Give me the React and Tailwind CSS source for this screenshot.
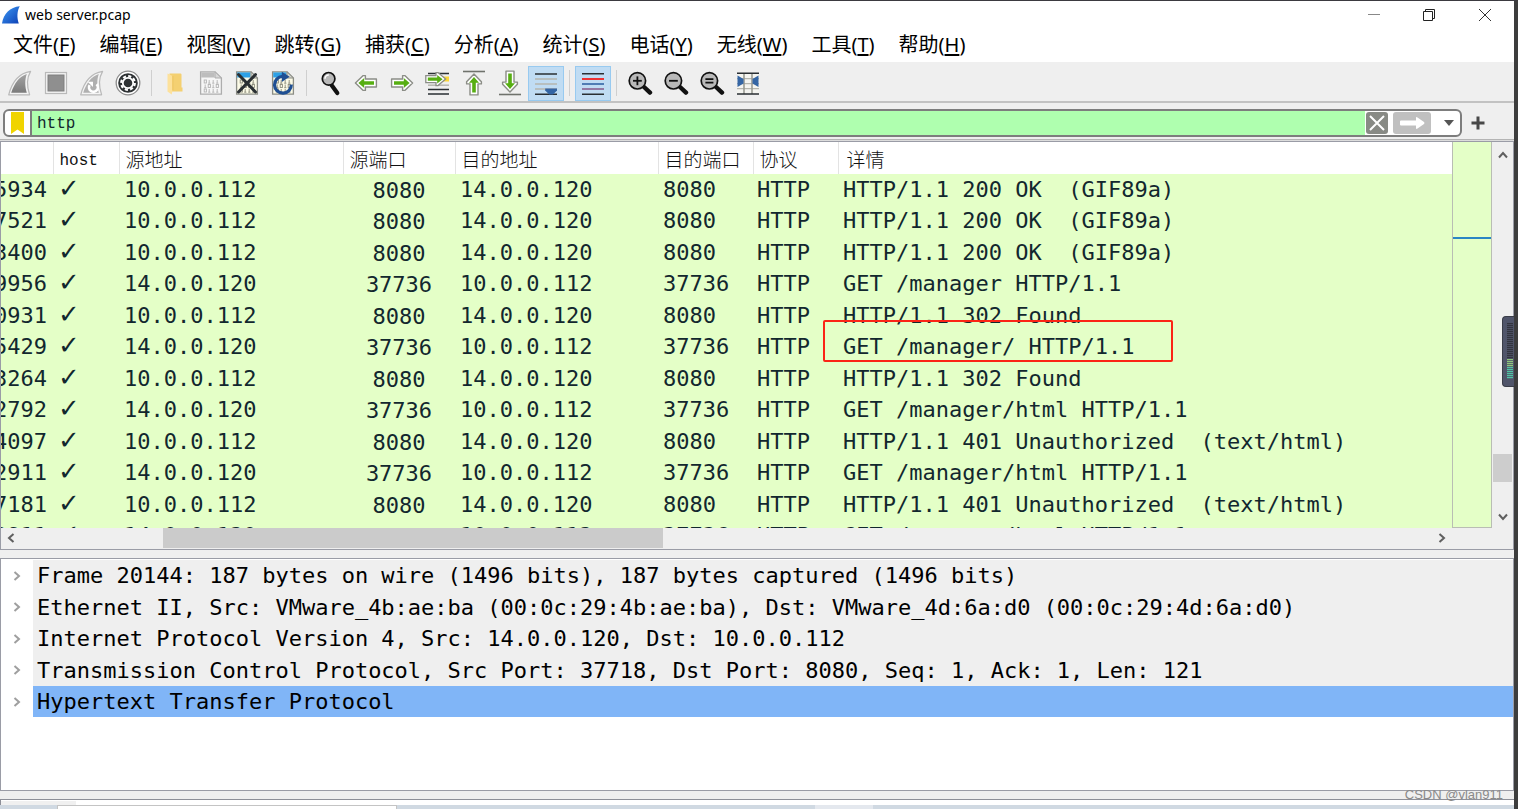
import React from "react";

const MENUS = [
  ["文件", "F"], ["编辑", "E"], ["视图", "V"], ["跳转", "G"], ["捕获", "C"], ["分析", "A"],
  ["统计", "S"], ["电话", "Y"], ["无线", "W"], ["工具", "T"], ["帮助", "H"],
];

const A = "10.0.0.112";
const B = "14.0.0.120";
const ROWS = [
  ["5934", A, "8080", B, "8080", "HTTP/1.1 200 OK  (GIF89a)"],
  ["7521", A, "8080", B, "8080", "HTTP/1.1 200 OK  (GIF89a)"],
  ["3400", A, "8080", B, "8080", "HTTP/1.1 200 OK  (GIF89a)"],
  ["9956", B, "37736", A, "37736", "GET /manager HTTP/1.1"],
  ["0931", A, "8080", B, "8080", "HTTP/1.1 302 Found"],
  ["5429", B, "37736", A, "37736", "GET /manager/ HTTP/1.1"],
  ["3264", A, "8080", B, "8080", "HTTP/1.1 302 Found"],
  ["2792", B, "37736", A, "37736", "GET /manager/html HTTP/1.1"],
  ["4097", A, "8080", B, "8080", "HTTP/1.1 401 Unauthorized  (text/html)"],
  ["2911", B, "37736", A, "37736", "GET /manager/html HTTP/1.1"],
  ["7181", A, "8080", B, "8080", "HTTP/1.1 401 Unauthorized  (text/html)"],
  ["2911", B, "37736", A, "37736", "GET /manager/html HTTP/1.1"],
];
const MARKED_ROW = 5;

const DETAILS = [
  "Frame 20144: 187 bytes on wire (1496 bits), 187 bytes captured (1496 bits)",
  "Ethernet II, Src: VMware_4b:ae:ba (00:0c:29:4b:ae:ba), Dst: VMware_4d:6a:d0 (00:0c:29:4d:6a:d0)",
  "Internet Protocol Version 4, Src: 14.0.0.120, Dst: 10.0.0.112",
  "Transmission Control Protocol, Src Port: 37718, Dst Port: 8080, Seq: 1, Ack: 1, Len: 121",
  "Hypertext Transfer Protocol",
];

function Svg({ children }) {
  return (
    <svg viewBox="0 0 26 26" className="size-[26px] shrink-0" fill="none" aria-hidden="true">
      {children}
    </svg>
  );
}

const FIN = "M1.7 24.8C5 12 12 3.2 23.6 1.4C19.6 8 20 17 22.6 24.8Z";
const FIN_IN = "M4.2 22.8C7.5 13.2 12 6.6 19.8 4C17.6 10 18 17 19.8 22.8Z";

function Fin({ restart }) {
  return (
    <Svg>
      <path d={FIN} fill="#f4f4f4" stroke="#b9b9b9" strokeWidth="1.2" strokeLinejoin="round" />
      <path d={FIN_IN} fill={restart ? "#b0b0b0" : "url(#finGray)"} />
      <defs>
        <linearGradient id="finGray" x1="0" y1="0" x2="0" y2="1">
          <stop offset="0" stopColor="#a4a4a4" />
          <stop offset="1" stopColor="#7b7b7b" />
        </linearGradient>
      </defs>
      {restart && (
        <>
          <path d="M17.5 14.2A4.4 4.4 0 1 1 10.6 15.2" stroke="#fff" strokeWidth="2.6" />
          <path d="M8.6 11.8H14V17Z" fill="#fff" />
        </>
      )}
    </Svg>
  );
}

function Stop() {
  return (
    <Svg>
      <rect x="2.5" y="2.5" width="21" height="21" fill="#f4f4f4" stroke="#b9b9b9" strokeWidth="1.2" />
      <rect x="5" y="5" width="16" height="16" fill="#8f8f8f" stroke="#7f7f7f" />
    </Svg>
  );
}

function Options() {
  return (
    <Svg>
      <circle cx="13" cy="13" r="11.8" fill="#fff" stroke="#8c8c8c" strokeWidth="1.3" />
      <circle cx="13" cy="13" r="9.8" fill="#2e3234" />
      <circle cx="13" cy="13" r="6.8" stroke="#fff" strokeWidth="2.2" strokeDasharray="3.1 2.24" />
      <circle cx="13" cy="13" r="5.2" stroke="#fff" strokeWidth="1.8" />
    </Svg>
  );
}

function Folder() {
  return (
    <Svg>
      <path d="M7.5 3.5H18.5Q19.5 3.5 19.5 4.5V17.5H20.5V21.5H7.5Z" fill="#f4d071" />
      <path d="M5.5 3.6L10.6 6V20.5L9.6 24.6L5.5 21.6Z" fill="#fde19b" />
      <path d="M10.8 6V20.5" stroke="#e9bf55" strokeWidth=".8" />
    </Svg>
  );
}

function Doc({ kind }) {
  const idle = kind === "save";
  const ink = idle ? "#b3b3b3" : "#8b8b7c";
  return (
    <Svg>
      <path d="M2.6 1.8H17L23.4 8V24.2H2.6Z" fill={idle ? "#f6f6f6" : "#fbfae6"} stroke={idle ? "#adadad" : "#8b8d86"} strokeWidth="1.3" />
      <path d="M3.2 2.4H16.5V7.5H3.2Z" fill={idle ? "#bdbdbd" : "#2ea1e6"} />
      <path d="M17 1.8V8H23.4Z" fill={idle ? "#d7d7d7" : "#d5d6cd"} stroke={idle ? "#adadad" : "#8b8d86"} />
      {[10, 14.5, 19].map((y, r) => (
        <g key={y} stroke={ink} strokeWidth=".9">
          {[6.2, 10.2, 14.2, 18.2].map((x, c) =>
            (r + c) % 2 || c === 2 ? (
              <path key={x} d={`M${x + 1} ${y}v3.2M${x} ${y + 3.2}h2.2`} />
            ) : (
              <rect key={x} x={x} y={y} width="2.2" height="3" />
            )
          )}
        </g>
      ))}
      {kind === "close" && <path d="M4.5 4.5L21.5 22M21.5 4.5L4.5 22" stroke="#2a2f33" strokeWidth="3" strokeLinecap="round" />}
      {kind === "reload" && (
        <>
          <path d="M21.3 14.6A8.4 8.4 0 1 1 12.5 6.4" stroke="#1f4f93" strokeWidth="3.2" />
          <path d="M11.8 1.8L19.6 6.8L11.8 12Z" fill="#1f4f93" />
        </>
      )}
    </Svg>
  );
}

function Find() {
  return (
    <Svg>
      <path d="M14.5 15L20.3 23" stroke="#111" strokeWidth="4.2" strokeLinecap="round" />
      <circle cx="11.6" cy="8.8" r="6.3" fill="#b9b9b9" stroke="#111" strokeWidth="1.7" />
      <path d="M8 8.8A3.8 3.8 0 0 1 11.8 5" stroke="#fff" strokeWidth="1.5" />
    </Svg>
  );
}

function Arrow({ dir }) {
  const turn = { right: 0, down: 90, left: 180, up: 270 }[dir];
  const shift = dir === "up" ? 1.5 : dir === "down" ? -1.5 : 0;
  return (
    <Svg>
      {dir === "up" && <path d="M2 1.5H24" stroke="#6f726c" strokeWidth="1.6" />}
      {dir === "down" && <path d="M2 24.5H24" stroke="#6f726c" strokeWidth="1.6" />}
      <g transform={`translate(0 ${shift}) rotate(${turn} 13 13)`}>
        <path d="M2.6 9H13.6V5.6H15.8L23.6 13L15.8 20.4H13.6V17H2.6Z" fill="#fff" stroke="#8b8d86" strokeWidth="1.4" strokeLinejoin="round" />
        <path d="M5 11.2H14.8V8L20.6 13L14.8 18V14.8H5Z" fill="#57ae12" />
      </g>
    </Svg>
  );
}

function GoTo() {
  return (
    <Svg>
      <path d="M3 3.5H24M3 19.5H24M3 24H24" stroke="#2a2f33" strokeWidth="1.6" />
      <path d="M3 15.2H24" stroke="#b5b5ae" strokeWidth="1.5" />
      <path d="M18 6.5H24V11.5H18Z" fill="#fbd63a" />
      <path d="M.8 5.6H11V2.6H13L20.6 9L13 15.6H11V12.6H.8Z" fill="#fff" stroke="#8b8d86" strokeWidth="1.3" />
      <path d="M2.8 7.6H12.2V5L17.6 9.2L12.2 13.4V10.8H2.8Z" fill="#57ae12" />
    </Svg>
  );
}

function AutoScroll() {
  return (
    <Svg>
      <path d="M2 4H24M2 24.2H24" stroke="#2a2f33" strokeWidth="1.6" />
      <path d="M2 9H24M2 14H24M2 19H24" stroke="#b5b5ae" strokeWidth="1.4" />
      <path d="M12.2 18.4H24V20.5L20 24.5H16.2L12.2 20.5Z" fill="#3465a4" />
    </Svg>
  );
}

function Colorize() {
  return (
    <Svg>
      <path d="M2 3.8H24M2 24.2H24" stroke="#2a2f33" strokeWidth="1.6" />
      <path d="M2 9H24" stroke="#ef2929" strokeWidth="1.9" />
      <path d="M2 14H24" stroke="#3465a4" strokeWidth="1.6" />
      <path d="M2 19H24" stroke="#8a5f8e" strokeWidth="1.6" />
    </Svg>
  );
}

function Zoom({ sign }) {
  return (
    <Svg>
      <path d="M16.5 16.5L23 22.6" stroke="#111" strokeWidth="4.4" strokeLinecap="round" />
      <circle cx="10.4" cy="10.8" r="8.2" fill="#b9b9b9" stroke="#111" strokeWidth="1.7" />
      {sign === "equal" ? (
        <path d="M6.4 9.2H14.4M6.4 12.6H14.4" stroke="#111" strokeWidth="1.7" />
      ) : (
        <path d="M6 10.8H14.8" stroke="#111" strokeWidth="1.8" />
      )}
      {sign === "plus" && <path d="M10.4 6.4V15.2" stroke="#111" strokeWidth="1.8" />}
    </Svg>
  );
}

function Resize() {
  return (
    <Svg>
      <path d="M2 3H24V24H2Z" fill="#f4f4f0" />
      <path d="M2 8.6H24M2 13.6H24M2 18.6H24" stroke="#b5b5ae" strokeWidth="1.4" />
      <path d="M9 3V24M17 3V24" stroke="#9a9c94" strokeWidth="1.6" />
      <path d="M2 3.3H24M2 24H24" stroke="#2a2f33" strokeWidth="1.6" />
      <path d="M2.5 5.5L8.5 9V13.5L2.5 17ZM23.5 5.5L17.5 9V13.5L23.5 17Z" fill="#3465a4" />
    </Svg>
  );
}

const TOOL_GROUPS = [
  [["Start", <Fin />], ["Stop", <Stop />], ["Restart", <Fin restart />], ["Options", <Options />]],
  [["Open", <Folder />], ["Save", <Doc kind="save" />], ["Close", <Doc kind="close" />], ["Reload", <Doc kind="reload" />]],
  [
    ["Find", <Find />], ["Back", <Arrow dir="left" />], ["Forward", <Arrow dir="right" />], ["Go to packet", <GoTo />],
    ["First packet", <Arrow dir="up" />], ["Last packet", <Arrow dir="down" />], ["Auto scroll", <AutoScroll />, true],
  ],
  [["Colorize", <Colorize />, true]],
  [["Zoom in", <Zoom sign="plus" />], ["Zoom out", <Zoom sign="minus" />], ["Normal size", <Zoom sign="equal" />], ["Resize columns", <Resize />]],
];

function TitleBar() {
  return (
    <header className="flex h-[28px] items-center bg-white pl-[2px]">
      <svg viewBox="0 0 18 18" className="size-[18px]" aria-hidden="true">
        <defs>
          <linearGradient id="finBlue" x1="0" y1="0" x2="1" y2="1">
            <stop offset="0" stopColor="#3f9bf5" />
            <stop offset="1" stopColor="#0c3fb4" />
          </linearGradient>
        </defs>
        <path d="M0 17.6C1.5 7.5 8 1.2 17.8 .3C15 5 14.8 11.5 16.8 17.6Z" fill="url(#finBlue)" />
      </svg>
      <h1 className="ml-[5px] font-['Noto_Sans','Noto_Sans_CJK_SC',sans-serif] text-[14px] leading-none text-black">web server.pcap</h1>
      <div className="ml-auto flex h-full">
        <button aria-label="Minimize" className="flex w-[54px] items-center justify-center">
          <svg viewBox="0 0 12 12" className="size-[12px]" stroke="#888"><path d="M0 5.5H12" /></svg>
        </button>
        <button aria-label="Restore" className="flex w-[55px] items-center justify-center">
          <svg viewBox="0 0 12 12" className="size-[12px]" fill="none" stroke="#222"><path d="M.5 2.5H9.5V11.5H.5ZM2.5 2.5V.5H11.5V9.5H9.5" /></svg>
        </button>
        <button aria-label="Close" className="flex w-[58px] items-center justify-center">
          <svg viewBox="0 0 12 12" className="size-[12px]" stroke="#333"><path d="M0 0L12 12M12 0L0 12" /></svg>
        </button>
      </div>
    </header>
  );
}

function Chevron({ d, className }) {
  return (
    <svg viewBox="0 0 10 10" className={className} fill="none" stroke="currentColor" strokeWidth="2" aria-hidden="true">
      <path d={d} />
    </svg>
  );
}

function FilterBar() {
  return (
    <div className="flex h-[36px] items-center bg-[#efefef] pt-[3px] pl-[3px]">
      <div className="flex h-[28px] min-w-0 flex-1 items-stretch overflow-hidden rounded-md border-2 border-[#7d7d7d] bg-white">
        <button aria-label="Bookmarks" className="flex w-[27px] items-center justify-center border-r-2 border-[#7d7d7d]">
          <svg viewBox="0 0 13 22" className="h-[22px] w-[13px]"><path d="M0 0H13V22L6.5 17.5L0 22Z" fill="#f0d400" /></svg>
        </button>
        <input
          aria-label="Display filter"
          defaultValue="http"
          className="min-w-0 flex-1 bg-[#afffaf] pt-[2px] pl-[5px] font-['Liberation_Mono',monospace] text-[16px] text-[#12272e] outline-none"
        />
        <button aria-label="Clear" className="m-px flex w-[22px] items-center justify-center rounded-[3px] bg-[#888a85]">
          <svg viewBox="0 0 16 16" className="size-[16px]" stroke="#fff" strokeWidth="2"><path d="M1 1L15 15M15 1L1 15" /></svg>
        </button>
        <button aria-label="Apply" className="m-px ml-[4px] flex w-[38px] items-center justify-center rounded-[3px] bg-[#c0c0c0]">
          <svg viewBox="0 0 26 14" className="h-[14px] w-[26px]"><path d="M2 4.5H17V2Q17 .5 18.5 1.5L25 6Q26 7 25 8L18.5 12.5Q17 13.5 17 12V9.5H2Q1 9.5 1 8.5V5.5Q1 4.5 2 4.5Z" fill="#fff" /></svg>
        </button>
        <button aria-label="Filter history" className="flex w-[28px] items-center justify-center pl-[6px]">
          <svg viewBox="0 0 12 6" className="h-[6px] w-[12px]"><path d="M1 0H11L6 6Z" fill="#555" /></svg>
        </button>
      </div>
      <button aria-label="Add filter button" className="flex w-[32px] items-center justify-center">
        <svg viewBox="0 0 14 14" className="size-[14px]" stroke="#484848" strokeWidth="3"><path d="M7 .5V13.5M.5 7H13.5" /></svg>
      </button>
      <div className="w-[20px]" />
    </div>
  );
}

const TH = "h-[32px] truncate border-r border-[#e3e3e3] p-0 pl-[6px] text-left font-light";

function PacketList() {
  return (
    <section className="relative shrink-0 border border-[#9a9ca6] bg-[#efefef]">
      <div className="flex h-[386px]">
        <div className="min-w-0 flex-1 overflow-hidden bg-[#e4ffc7]">
          <table className="w-full table-fixed border-collapse font-['DejaVu_Sans_Mono','Noto_Sans_CJK_SC',monospace] text-[22px] leading-none whitespace-pre text-[#12272e]">
            <colgroup>
              <col className="w-[52px]" />
              <col className="w-[66px]" />
              <col className="w-[224px]" />
              <col className="w-[112px]" />
              <col className="w-[203px]" />
              <col className="w-[95px]" />
              <col className="w-[85px]" />
              <col />
            </colgroup>
            <thead className="bg-white font-['Noto_Sans_CJK_SC',sans-serif] text-[19px] text-[#111]">
              <tr>
                <th className={TH}></th>
                <th className={TH}><span className="font-['Liberation_Mono',monospace] text-[16px]">host</span></th>
                <th className={TH}>源地址</th>
                <th className={TH}>源端口</th>
                <th className={TH}>目的地址</th>
                <th className={TH}>目的端口</th>
                <th className={TH}>协议</th>
                <th className="h-[32px] p-0 pl-[8px] text-left font-light">详情</th>
              </tr>
            </thead>
            <tbody>
              {ROWS.map(([time, src, sport, dst, dport, info], i) => (
                <tr key={i} className="odd:h-[31px] even:h-[32px]">
                  <td className="p-0 pr-[6px]"><div className="flex justify-end overflow-hidden">{time}</div></td>
                  <td className="p-0 pb-[4px] pl-[5px] font-['DejaVu_Sans',sans-serif] text-[26px] leading-[22px]">✓</td>
                  <td className="p-0 pl-[5px]">{src}</td>
                  <td className="p-0 pt-[2px] text-center">{sport}</td>
                  <td className="p-0 pl-[5px]">{dst}</td>
                  <td className="p-0 pl-[5px]">{dport}</td>
                  <td className="p-0 pl-[4px]">HTTP</td>
                  <td className="relative p-0 pl-[5px]">
                    {info}
                    {i === MARKED_ROW && (
                      <div className="absolute -top-[11px] -left-[15px] h-[42px] w-[350px] rounded-[2px] border-2 border-[#fb2416]" />
                    )}
                  </td>
                </tr>
              ))}
            </tbody>
          </table>
        </div>
        <div className="flex w-[40px] flex-col border border-t-0 border-[#b9bdb4] bg-[#e4ffc7]">
          <div className="mt-[95px] h-[2px] bg-[#2a86c4]" />
        </div>
        <div className="flex w-[21px] flex-col items-center pt-[8px] pb-[6px] text-[#5f5f5f]">
          <Chevron d="M1 7.5L5 3L9 7.5" className="size-[10px]" />
          <div className="mt-auto h-[28px] w-[19px] bg-[#cdcdcd]" />
          <Chevron d="M1 2.5L5 7L9 2.5" className="mt-[30px] size-[10px]" />
        </div>
      </div>
      <div className="flex h-[21px] items-center pr-[66px] pb-px pl-[5px] text-[#5f5f5f]">
        <Chevron d="M7.5 1L3 5L7.5 9" className="size-[10px]" />
        <div className="mx-[6px] flex h-full flex-1">
          <div className="ml-[10%] h-full w-[35.5%] bg-[#cbcbcb]" />
        </div>
        <Chevron d="M2.5 1L7 5L2.5 9" className="size-[10px]" />
      </div>
      <div className="absolute top-[174px] -right-px flex h-[71px] w-[12px] flex-col items-end rounded-l-[4px] border border-r-0 border-[#3a3d48] bg-[#50556a] pt-[6px] pr-px">
        <svg viewBox="0 0 6 56" className="h-[56px] w-[6px]" aria-hidden="true">
          {Array.from({ length: 28 }, (_, i) => (
            <rect key={i} y={i * 2} width="6" height="1.2" fill={i < 18 ? "#33353f" : i < 22 ? "#8fc77c" : "#4fc4a4"} />
          ))}
        </svg>
      </div>
    </section>
  );
}

function DetailTree() {
  return (
    <ul className="flex-1 border border-[#9a9ca6] bg-white pt-px font-['DejaVu_Sans_Mono',monospace] text-[22px] leading-none whitespace-pre text-black">
      {DETAILS.map((text, i) => (
        <li key={text} className="flex odd:h-[31px] even:h-[32px]">
          <button aria-label="Expand" className="flex w-[32px] items-center justify-center text-[#9f9f9f]">
            <Chevron d="M2.5 1L7 5L2.5 9" className="size-[10px]" />
          </button>
          <div className={`flex min-w-0 flex-1 items-center overflow-hidden pt-px pl-[4px] ${i === 4 ? "bg-[#80b5f7]" : "bg-[#efefef]"}`}>
            {text}
          </div>
        </li>
      ))}
    </ul>
  );
}

export default function App() {
  return (
    <div className="relative flex h-screen flex-col overflow-hidden border-t border-r-4 border-t-[#3b3a40] border-r-[#3d3d3d] bg-[#efefef]">
      <TitleBar />
      <nav className="flex h-[33px] items-center gap-[24px] bg-white pb-[2px] pl-[13px] font-['Noto_Sans','Noto_Sans_CJK_SC',sans-serif] text-[20px] leading-none whitespace-nowrap text-black">
        {MENUS.map(([name, key]) => (
          <button key={key}>
            {name}(<span className="underline underline-offset-2">{key}</span>)
          </button>
        ))}
      </nav>
      <div className="flex h-[41px] items-center border-b-2 border-[#c2c2c2] pt-[3px] pl-[2px]">
        {TOOL_GROUPS.map((group, g) => (
          <React.Fragment key={g}>
            {g > 0 && <div className="mx-[5px] h-[26px] w-px bg-[#cfcfcf]" />}
            {group.map(([label, icon, on]) => (
              <button
                key={label}
                aria-label={label}
                className={`flex h-[35px] w-[36px] items-center justify-center ${on ? "border border-[#98caf0] bg-[#c0dcf3]" : ""}`}
              >
                {icon}
              </button>
            ))}
          </React.Fragment>
        ))}
      </div>
      <FilterBar />
      <div className="h-[2px] border-t border-[#b4b4b4] bg-[#dcdcdc]" />
      <PacketList />
      <div className="h-[8px] shrink-0" />
      <DetailTree />
      <div className="h-[8px] shrink-0" />
      <div className="h-[6px] border-t border-l border-[#8d8f98] bg-white pt-px">
        <div className="h-[4px] w-[75px] bg-[#f0f0f0]" />
      </div>
      <div className="flex h-[4px] shrink-0 bg-[#d0d9e2] pl-[57px]">
        <div className="w-[340px] border border-b-0 border-[#c4c4c4] bg-white" />
        <div className="ml-[418px] w-[58px] bg-[#e4e8ee]" />
      </div>
      <div className="absolute right-[11px] bottom-[6px] font-['Liberation_Sans',sans-serif] text-[13px] leading-[16px] text-[#8a8a8a]">
        CSDN @vlan911
      </div>
    </div>
  );
}
